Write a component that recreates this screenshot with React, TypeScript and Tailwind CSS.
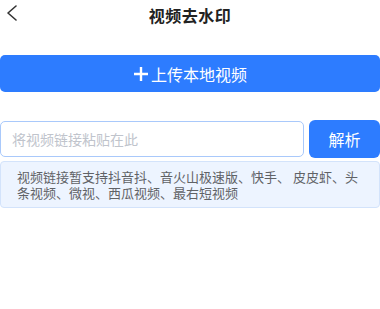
import React from "react";

export default function App() {
  return (
    <div
      className="w-[380px] h-[309px] bg-white"
      style={{ fontFamily: '"Noto Sans CJK SC", "Noto Sans", sans-serif' }}
    >
      <div className="relative h-[30px] flex items-center justify-center">
        <svg
          className="absolute left-[6px] top-[5px]"
          width="12"
          height="16"
          viewBox="0 0 12 16"
          fill="none"
        >
          <path d="M10 1 L2 8 L10 15" stroke="#333" strokeWidth="1.6" strokeLinecap="round" strokeLinejoin="round" />
        </svg>
        <span className="text-[16px] font-bold text-[#222] leading-none tracking-[0.5px]">视频去水印</span>
      </div>
      <div className="mt-[25px]">
        <button className="w-full h-[37px] rounded-[5px] bg-[#2d7cff] text-white flex items-center justify-center text-[16px] leading-none">
          <svg width="16" height="16" viewBox="0 0 16 16" className="mr-[2px]">
            <path d="M8 1 V15 M1 8 H15" stroke="white" strokeWidth="2.4" />
          </svg>
          上传本地视频
        </button>
      </div>
      <div className="mt-[28px] flex items-center gap-[5px]">
        <div className="w-[304px] h-[36px] border border-[#a9c9fb] rounded-[5px] flex items-center px-[11px]">
          <span className="text-[14px] text-[#c0c4cc] leading-none">将视频链接粘贴在此</span>
        </div>
        <button className="flex-1 h-[38px] rounded-[6px] bg-[#2d7cff] text-white text-[16px] leading-none flex items-center justify-center">
          解析
        </button>
      </div>
      <div className="mt-[3px] border border-[#d3e3fb] bg-[#edf4ff] rounded-[4px] pl-[16px] pr-[18px] pt-[7px] pb-[6px]">
        <p className="text-[13px] leading-[16px] text-[#606266]">
          视频链接暂支持抖音抖、音火山极速版、快手、 皮皮虾、头条视频、微视、西瓜视频、最右短视频
        </p>
      </div>
    </div>
  );
}
